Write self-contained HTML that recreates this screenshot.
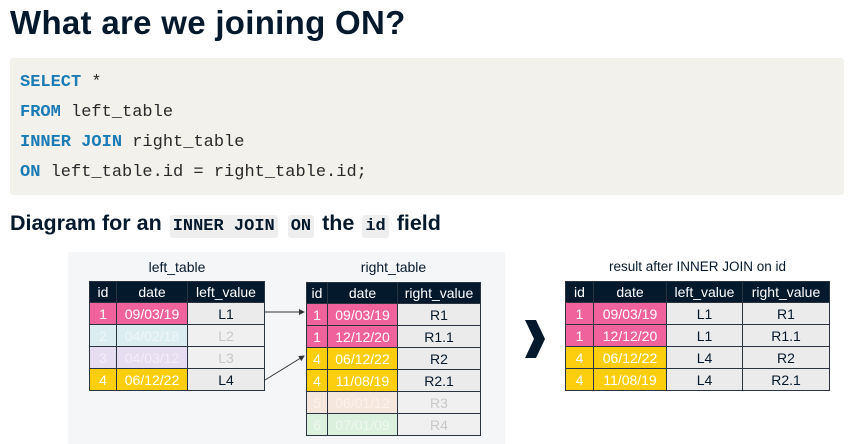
<!DOCTYPE html>
<html><head><meta charset="utf-8"><style>
*{margin:0;padding:0;box-sizing:border-box}
body{width:854px;height:444px;background:#fff;position:relative;overflow:hidden;font-family:"Liberation Sans",sans-serif;color:#05192d}
.abs{position:absolute}
h1{position:absolute;left:10px;top:4px;font-size:33px;font-weight:bold;letter-spacing:0.3px;white-space:nowrap}
.code{position:absolute;left:10px;top:58px;width:834px;height:137px;background:#f3f1ec;border-radius:3px}
.code div{position:absolute;left:10px;font-family:"Liberation Mono",monospace;font-size:17px;color:#2a2a2a;white-space:pre}
.k{color:#1a7bb5;font-weight:bold}
.sub{position:absolute;left:10px;top:211px;font-size:21.5px;font-weight:bold;white-space:nowrap}
.sub code{font-family:"Liberation Mono",monospace;font-size:17px;background:#eeeeee;padding:2px 3px;border-radius:3px;margin:0 2px}
.panel{position:absolute;left:68px;top:252px;width:437px;height:192px;background:#f5f6f8}
table{position:absolute;border-collapse:collapse;font-size:14px;text-align:center}
td,th{border:1px solid #2a3340;height:22px;padding:0;white-space:nowrap}
th{background:#05192d;color:#fff;font-weight:normal;height:21px}
.p{background:#f0629c;color:#fff}.y{background:#fcce0d;color:#fff}.g{background:#ebebeb;color:#05192d}
.fb{background:#dcedf2;color:#eef6f9}.fl{background:#e6def0;color:#f3eef8}.fpe{background:#f6e7de;color:#fbf2ec}.fgr{background:#dcf0de;color:#eef8ef}
.fg{background:#f0f0f0;color:#c8c8c8}
.t{position:absolute;font-size:14px;text-align:center}
</style></head><body>
<h1>What are we joining ON?</h1>
<div class="code">
<div style="top:15px"><span class="k">SELECT</span> *</div>
<div style="top:45px"><span class="k">FROM</span> left_table</div>
<div style="top:75px"><span class="k">INNER JOIN</span> right_table</div>
<div style="top:105px"><span class="k">ON</span> left_table.id = right_table.id;</div>
</div>
<div class="sub">Diagram for an <code>INNER JOIN</code> <code>ON</code> the <code>id</code> field</div>
<div class="panel"></div>
<div class="t" style="left:89px;width:176px;top:259px">left_table</div>
<table style="left:89px;top:281px;width:176px">
<tr><th style="width:27px">id</th><th style="width:71px">date</th><th>left_value</th></tr>
<tr><td class="p">1</td><td class="p">09/03/19</td><td class="g">L1</td></tr>
<tr><td class="fb">2</td><td class="fb">04/02/18</td><td class="fg">L2</td></tr>
<tr><td class="fl">3</td><td class="fl">04/03/12</td><td class="fg">L3</td></tr>
<tr><td class="y">4</td><td class="y">06/12/22</td><td class="g">L4</td></tr>
</table>
<div class="t" style="left:306px;width:175px;top:259px">right_table</div>
<table style="left:306px;top:282px;width:175px">
<tr><th style="width:21px">id</th><th style="width:70px">date</th><th>right_value</th></tr>
<tr><td class="p">1</td><td class="p">09/03/19</td><td class="g">R1</td></tr>
<tr><td class="p">1</td><td class="p">12/12/20</td><td class="g">R1.1</td></tr>
<tr><td class="y">4</td><td class="y">06/12/22</td><td class="g">R2</td></tr>
<tr><td class="y">4</td><td class="y">11/08/19</td><td class="g">R2.1</td></tr>
<tr><td class="fpe">5</td><td class="fpe">06/01/12</td><td class="fg">R3</td></tr>
<tr><td class="fgr">6</td><td class="fgr">07/01/09</td><td class="fg">R4</td></tr>
</table>
<svg class="abs" style="left:0;top:0" width="854" height="444">
<defs><marker id="a" markerWidth="6" markerHeight="6" refX="5" refY="3" orient="auto"><path d="M0,0L6,3L0,6z" fill="#333"/></marker></defs>
<line x1="265" y1="312" x2="304" y2="312" stroke="#333" stroke-width="1" marker-end="url(#a)"/>
<line x1="265" y1="380" x2="304" y2="356" stroke="#333" stroke-width="1" marker-end="url(#a)"/>
<path d="M525,320 L536,320 L545,339 L536,358 L525,358 L534,339 Z" fill="#05192d"/>
</svg>
<div class="t" style="left:565px;width:265px;top:259px;font-size:13.5px">result after INNER JOIN on id</div>
<table style="left:565px;top:281px;width:265px">
<tr><th style="width:28px">id</th><th style="width:73px">date</th><th style="width:76px">left_value</th><th>right_value</th></tr>
<tr><td class="p">1</td><td class="p">09/03/19</td><td class="g">L1</td><td class="g">R1</td></tr>
<tr><td class="p">1</td><td class="p">12/12/20</td><td class="g">L1</td><td class="g">R1.1</td></tr>
<tr><td class="y">4</td><td class="y">06/12/22</td><td class="g">L4</td><td class="g">R2</td></tr>
<tr><td class="y">4</td><td class="y">11/08/19</td><td class="g">L4</td><td class="g">R2.1</td></tr>
</table>
</body></html>
